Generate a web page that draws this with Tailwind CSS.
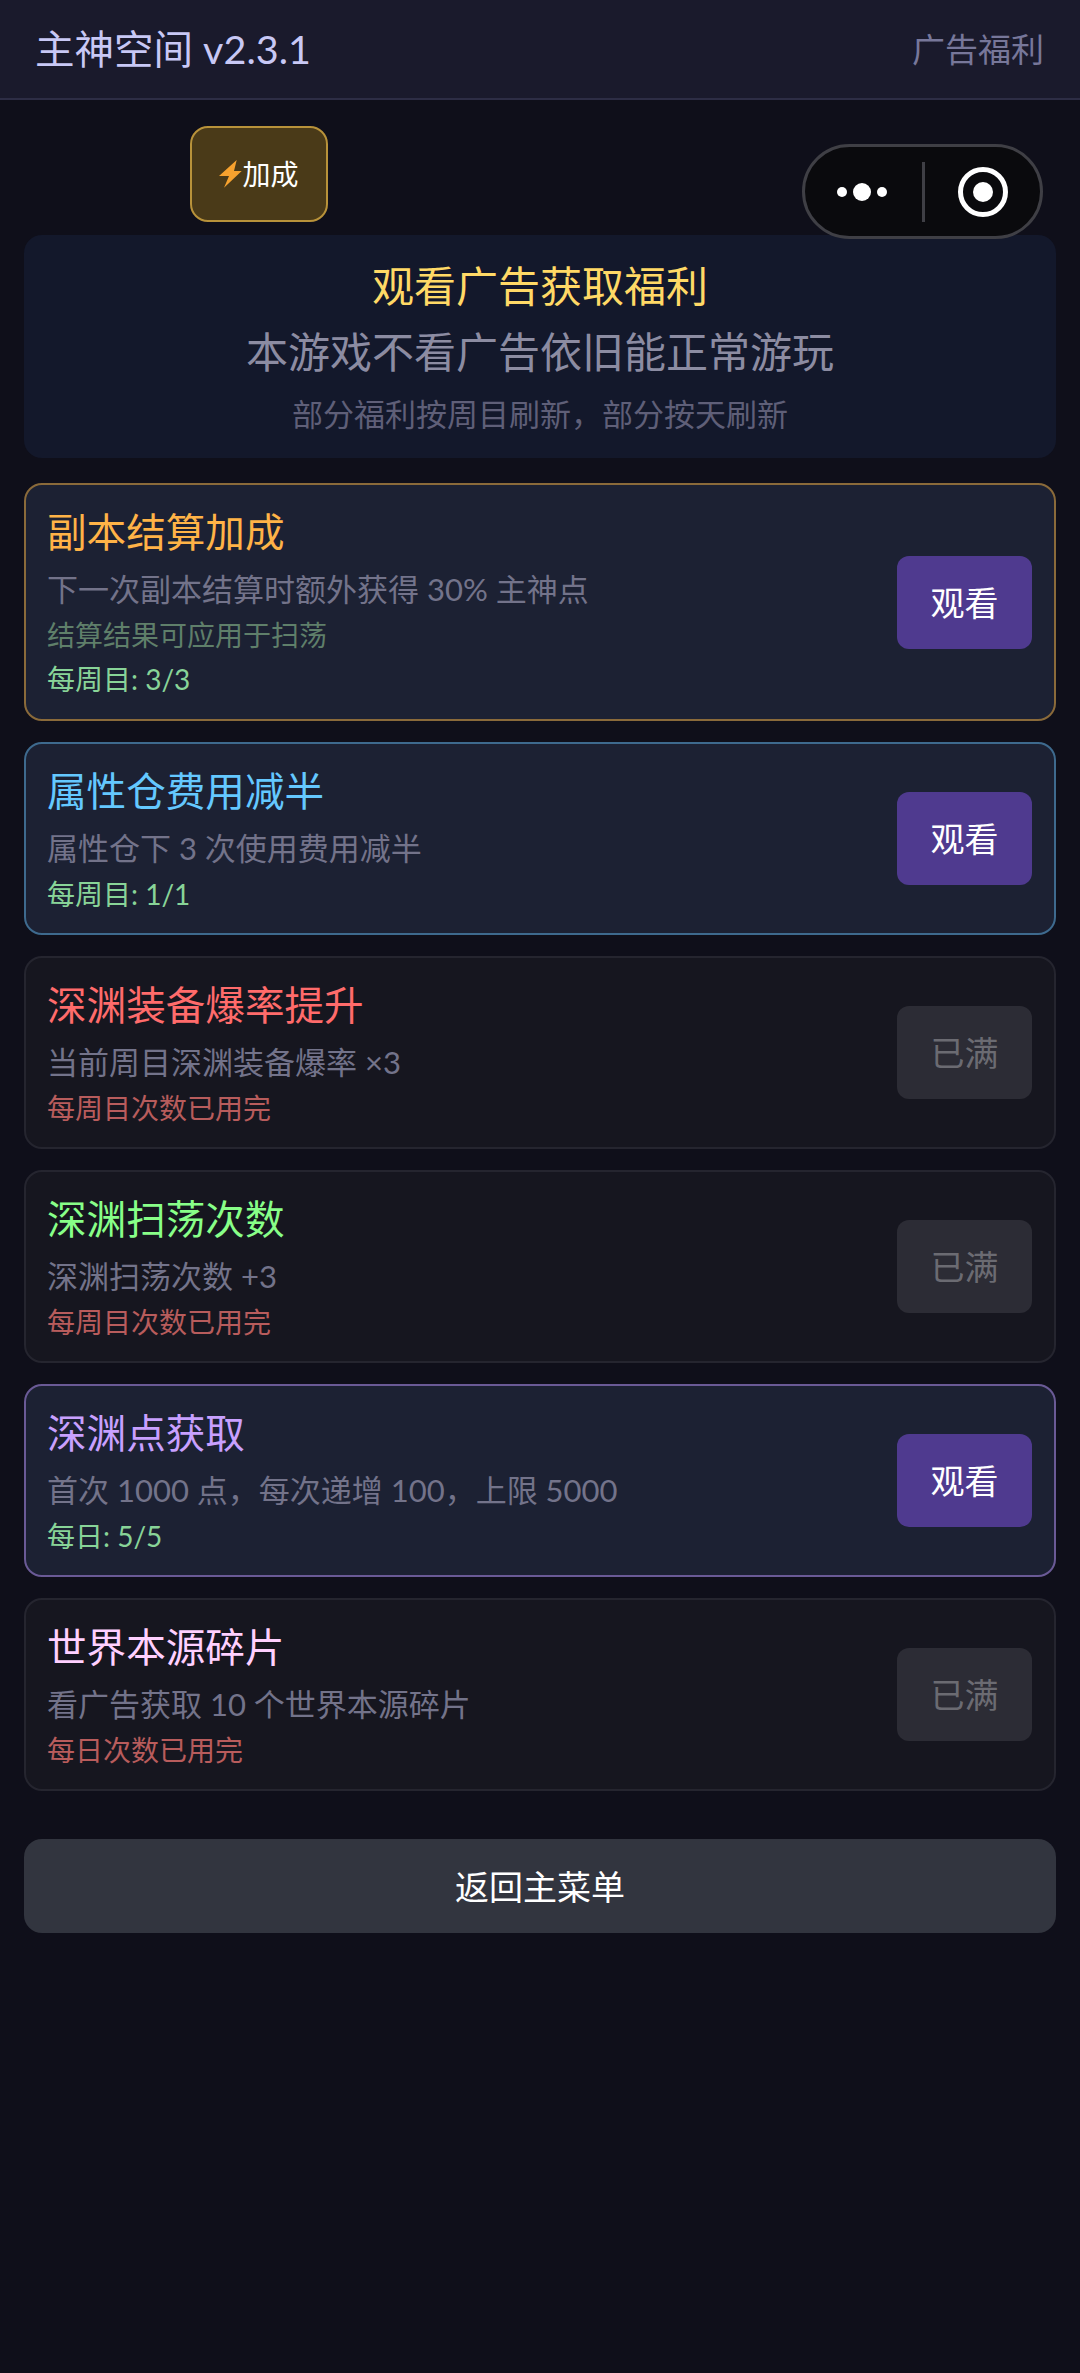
<!DOCTYPE html>
<html lang="zh">
<head>
    <meta charset="UTF-8">
    <meta name="viewport" content="width=device-width, initial-scale=1.0">
    <title>主神空间 广告福利</title>
    <script src="https://cdn.jsdelivr.net/npm/@tailwindcss/browser@4"></script>
</head>
<body class="relative w-[1080px] h-[2373px] overflow-hidden bg-[#0f0f1a] font-['Lato','Noto_Sans_CJK_SC',sans-serif]">
    <!-- Header -->
    <header class="h-[100px] bg-[#1a1a2c] border-b-[2px] border-[#2d2d45] flex items-center justify-between pl-[35px] pr-[36px]">
        <h1 class="text-[39.500px] leading-[48px] text-[#c8c8f5]">主神空间 v2.3.1</h1>
        <span class="text-[33px] leading-[42px] text-[#77779a]">广告福利</span>
    </header>

    <!-- Floating badge -->
    <div class="absolute left-[190px] top-[126px] w-[138px] h-[96px] rounded-[18px] border-[2px] border-[#b8923a] bg-[#4a3a18] flex items-center justify-center">
        <svg class="w-[23px] h-[28px] shrink-0" viewBox="0 0 23 28"><path d="M17.700 0 L0 16 H10 L5 27.700 L22.700 11 H15 Z" fill="#f7a22e"/></svg>
        <span class="text-[28px] leading-[36px] text-white">加成</span>
    </div>

    <!-- Mini program capsule -->
    <div class="absolute left-[802px] top-[144px] w-[241px] h-[95px] rounded-full border-[3px] border-[#3f3f45] bg-[#0a0a0d] z-10 flex items-center">
        <div class="w-[117px] pr-[4px] flex items-center justify-center gap-[6px]">
            <span class="w-[10px] h-[10px] rounded-full bg-white"></span>
            <span class="w-[18px] h-[18px] rounded-full bg-white"></span>
            <span class="w-[10px] h-[10px] rounded-full bg-white"></span>
        </div>
        <div class="w-[3px] h-[60px] bg-[#3f3f45]"></div>
        <div class="flex-1 flex items-center justify-center">
            <div class="w-[50px] h-[50px] rounded-full border-[5px] border-white flex items-center justify-center">
                <span class="w-[20px] h-[20px] rounded-full bg-white"></span>
            </div>
        </div>
    </div>

    <main class="px-[24px] pt-[135px]">
        <!-- Intro -->
        <section class="h-[223px] rounded-[18px] bg-[#13182b] pt-[24px] text-center">
            <h2 class="text-[42px] leading-[54px] text-[#ffd966]">观看广告获取福利</h2>
            <p class="mt-[12px] text-[42px] leading-[54px] text-[#8c8ca2]">本游戏不看广告依旧能正常游玩</p>
            <p class="mt-[15px] text-[31px] leading-[40px] text-[#5f5f78]">部分福利按周目刷新，部分按天刷新</p>
        </section>

        <div class="mt-[25px] flex flex-col gap-[21px]">
            <!-- Card: dungeon bonus -->
            <div class="h-[238px] rounded-[18px] border-[2px] border-[#8a6a3a] bg-[#1c2133] pl-[21px] pr-[22px] flex items-center justify-between">
                <div class="pt-[2px]">
                    <h3 class="text-[39.600px] leading-[48px] text-[#ffb347]">副本结算加成</h3>
                    <p class="mt-[12px] text-[31px] leading-[42px] text-[#73738a]">下一次副本结算时额外获得 30% 主神点</p>
                    <p class="mt-[6px] text-[28px] leading-[38px] text-[#5f7f6a]">结算结果可应用于扫荡</p>
                    <p class="mt-[6px] text-[28px] leading-[38px] text-[#88d498]">每周目: 3/3</p>
                </div>
                <button class="w-[135px] h-[93px] rounded-[12px] bg-[#4f3a8f] text-[34px] text-white">观看</button>
            </div>

            <!-- Card: attribute warehouse -->
            <div class="h-[193px] rounded-[18px] border-[2px] border-[#3e6a8e] bg-[#1c2133] pl-[21px] pr-[22px] flex items-center justify-between">
                <div class="pt-[2px]">
                    <h3 class="text-[39.600px] leading-[48px] text-[#64c8ff]">属性仓费用减半</h3>
                    <p class="mt-[12px] text-[31px] leading-[42px] text-[#73738a]">属性仓下 3 次使用费用减半</p>
                    <p class="mt-[6px] text-[28px] leading-[38px] text-[#88d498]">每周目: 1/1</p>
                </div>
                <button class="w-[135px] h-[93px] rounded-[12px] bg-[#4f3a8f] text-[34px] text-white">观看</button>
            </div>

            <!-- Card: abyss drop rate -->
            <div class="h-[193px] rounded-[18px] border-[2px] border-[#25252f] bg-[#16161f] pl-[21px] pr-[22px] flex items-center justify-between">
                <div class="pt-[2px]">
                    <h3 class="text-[39.600px] leading-[48px] text-[#ff6b6b]">深渊装备爆率提升</h3>
                    <p class="mt-[12px] text-[31px] leading-[42px] text-[#73738a]">当前周目深渊装备爆率 ×3</p>
                    <p class="mt-[6px] text-[28px] leading-[38px] text-[#b85c5c]">每周目次数已用完</p>
                </div>
                <button class="w-[135px] h-[93px] rounded-[12px] bg-[#2c2c35] text-[34px] text-[#6b6b72]">已满</button>
            </div>

            <!-- Card: abyss sweeps -->
            <div class="h-[193px] rounded-[18px] border-[2px] border-[#25252f] bg-[#16161f] pl-[21px] pr-[22px] flex items-center justify-between">
                <div class="pt-[2px]">
                    <h3 class="text-[39.600px] leading-[48px] text-[#88ff88]">深渊扫荡次数</h3>
                    <p class="mt-[12px] text-[31px] leading-[42px] text-[#73738a]">深渊扫荡次数 +3</p>
                    <p class="mt-[6px] text-[28px] leading-[38px] text-[#b85c5c]">每周目次数已用完</p>
                </div>
                <button class="w-[135px] h-[93px] rounded-[12px] bg-[#2c2c35] text-[34px] text-[#6b6b72]">已满</button>
            </div>

            <!-- Card: abyss points -->
            <div class="h-[193px] rounded-[18px] border-[2px] border-[#6a5a96] bg-[#1c2133] pl-[21px] pr-[22px] flex items-center justify-between">
                <div class="pt-[2px]">
                    <h3 class="text-[39.600px] leading-[48px] text-[#c8a0ff]">深渊点获取</h3>
                    <p class="mt-[12px] text-[31px] leading-[42px] text-[#73738a]">首次 1000 点，每次递增 100，上限 5000</p>
                    <p class="mt-[6px] text-[28px] leading-[38px] text-[#88d498]">每日: 5/5</p>
                </div>
                <button class="w-[135px] h-[93px] rounded-[12px] bg-[#4f3a8f] text-[34px] text-white">观看</button>
            </div>

            <!-- Card: world fragments -->
            <div class="h-[193px] rounded-[18px] border-[2px] border-[#25252f] bg-[#16161f] pl-[21px] pr-[22px] flex items-center justify-between">
                <div class="pt-[2px]">
                    <h3 class="text-[39.600px] leading-[48px] text-[#ffd0ff]">世界本源碎片</h3>
                    <p class="mt-[12px] text-[31px] leading-[42px] text-[#73738a]">看广告获取 10 个世界本源碎片</p>
                    <p class="mt-[6px] text-[28px] leading-[38px] text-[#b85c5c]">每日次数已用完</p>
                </div>
                <button class="w-[135px] h-[93px] rounded-[12px] bg-[#2c2c35] text-[34px] text-[#6b6b72]">已满</button>
            </div>
        </div>

        <button class="mt-[48px] w-full h-[94px] rounded-[18px] bg-[#32353f] text-[34px] text-white">返回主菜单</button>
    </main>
</body>
</html>
